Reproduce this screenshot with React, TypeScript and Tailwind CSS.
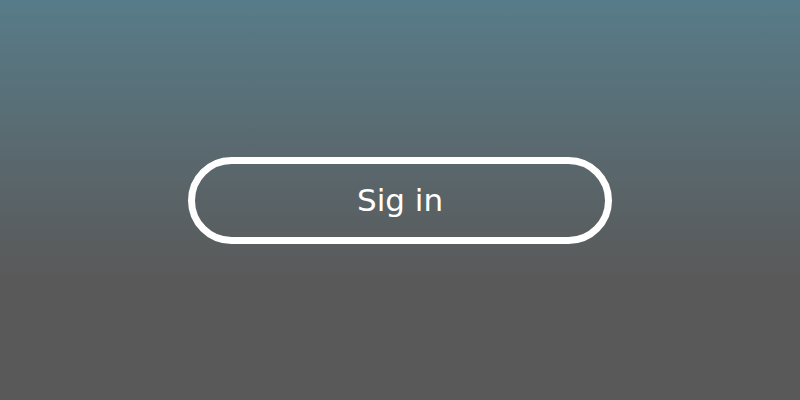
export default function App() {
  return (
    <div className="w-[800px] h-[400px] flex items-center justify-center bg-gradient-to-b from-[#577c89] to-[#595959] to-70%">
      <button className="w-[424px] h-[87px] rounded-full border-[7px] border-white text-white text-[31px] font-['DejaVu_Sans',sans-serif] flex items-center justify-center">
        Sig in
      </button>
    </div>
  );
}
